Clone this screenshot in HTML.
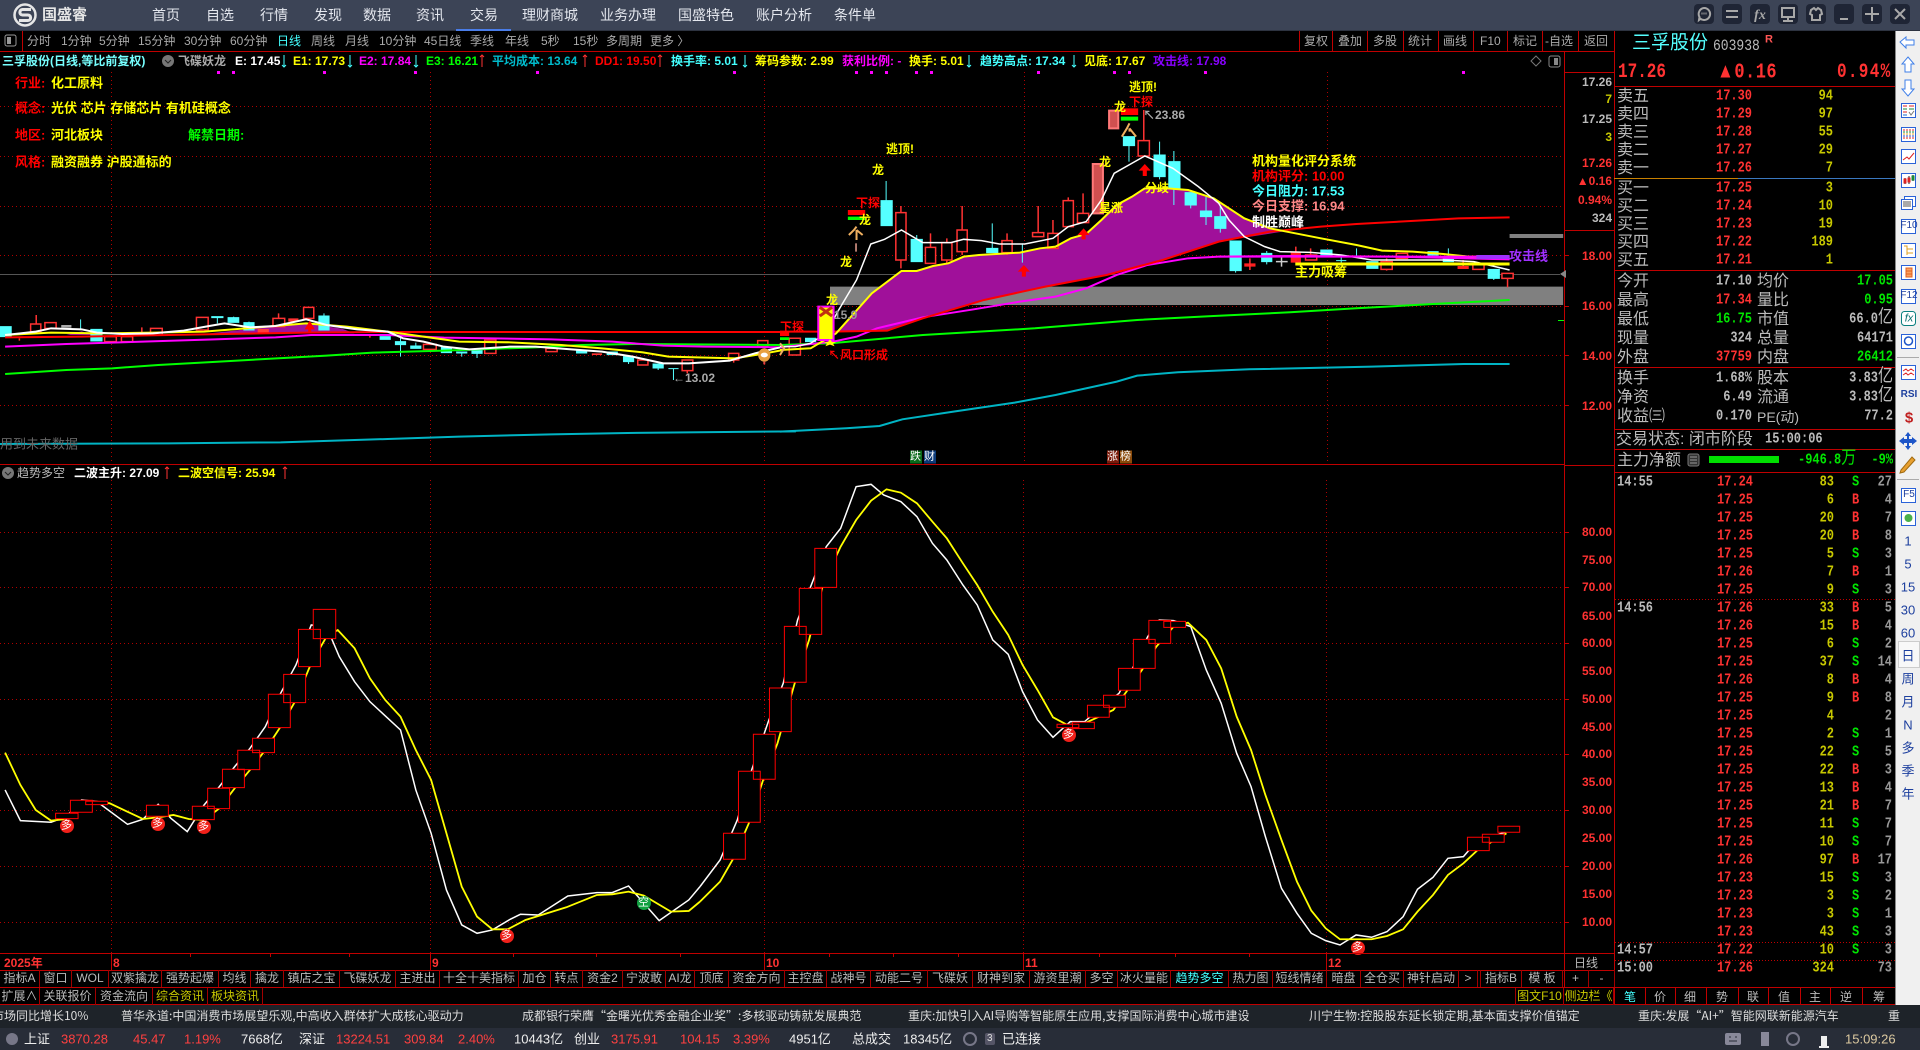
<!DOCTYPE html>
<html lang="zh"><head><meta charset="utf-8"><title>国盛睿</title>
<style>
html,body{margin:0;padding:0;background:#000;width:1920px;height:1050px;overflow:hidden}
body{position:relative;font-family:"Liberation Sans","Noto Sans CJK SC",sans-serif;font-size:12px;color:#bbb}
svg{position:absolute;left:0;top:0}
svg path,svg polyline,svg rect,svg line{vector-effect:non-scaling-stroke}
.t{position:absolute;white-space:nowrap;line-height:1;transform:translateY(-50%)}
.b{font-weight:bold}
.bar{position:absolute;left:0;width:1920px}
.n{position:absolute;top:15px;transform:translateY(-50%);font-size:14px;color:#e4e7ee;white-space:nowrap;line-height:1}
.tb{position:absolute;top:41px;transform:translateY(-50%);font-size:12px;color:#aaa;white-space:nowrap;line-height:1}
.lg{position:absolute;top:61px;transform:translateY(-50%);font-size:12px;font-weight:bold;white-space:nowrap;line-height:1}
.tab{position:absolute;height:17px;line-height:17px;text-align:center;font-size:12px;color:#bbb;border-right:1px solid #a00000;box-sizing:border-box;white-space:nowrap;overflow:hidden}
.r1{top:970px}.r2{top:988px}
.lb{position:absolute;left:1617px;font-size:16px;color:#bbb;line-height:1;transform:translateY(calc(-50% + 1px));white-space:nowrap}
.lb2{left:1757px}
.m{position:absolute;font-family:"Liberation Mono","Noto Sans CJK SC",monospace;font-size:12px;font-weight:bold;line-height:1;transform:translateY(-50%) scaleY(1.2);white-space:nowrap}
.m u{text-decoration:none;font-size:15px;line-height:0;font-weight:normal;font-family:"Noto Sans CJK SC",sans-serif}
.rd{color:#ff3232}.ye{color:#c8c800}.gr{color:#00e600}.wh{color:#bbb}
.tk{position:absolute;left:1614px;width:281px;height:18px}
.tk span{position:absolute;top:3px;font-family:"Liberation Mono",monospace;font-size:12px;font-weight:bold;line-height:1;white-space:nowrap;transform:scaleY(1.2)}
.a{right:142px;color:#ff3232}.v{right:61px;color:#c8c800}.s{left:238px}.c{right:3px;color:#999}.h{left:3px;color:#bbb}
.sb{position:absolute;left:1896px;width:24px;text-align:center;color:#1d3f9e;font-size:13px;line-height:1;transform:translateY(-50%)}
.ax{position:absolute;left:1566px;width:46px;text-align:right;font-size:12px;font-weight:bold;line-height:1;transform:translateY(-50%);color:#ff3232}
.ch{position:absolute;font-size:12px;font-weight:bold;line-height:1;transform:translateY(-50%);white-space:nowrap}
.f13{font-size:13px}
.ne{position:absolute;top:1016px;transform:translateY(-50%);color:#ddd;font-size:12px;white-space:nowrap;line-height:1;font-family:"Noto Sans CJK SC",sans-serif}
.st{position:absolute;top:1039px;transform:translateY(-50%);font-size:13px;white-space:nowrap;line-height:1}
.pk{color:#ff4040}.wt{color:#eee}
.big{position:absolute;top:72px;font-family:"Liberation Mono",monospace;font-size:16px;font-weight:bold;color:#ff3232;line-height:1;transform:translateY(-50%) scaleY(1.25);white-space:nowrap}
</style></head><body>

<svg width="1920" height="1050" viewBox="0 0 1920 1050">
<!-- grid -->
<g stroke="#b00000" stroke-width="1" stroke-dasharray="1 3" fill="none">
<path d="M0 106.500H1564M0 156.500H1564M0 206.500H1564M0 255.500H1564M0 306.500H1564M0 355.500H1564M0 405.500H1564"/>
<path d="M0 532.500H1564M0 587.500H1564M0 643.500H1564M0 699.500H1564M0 754.500H1564M0 810.500H1564M0 866.500H1564M0 922.500H1564"/>
<path d="M111.500 72V464M430.500 72V464M764.500 72V464M1024.500 72V464M1327.500 72V464"/>
<path d="M111.500 480V954M430.500 480V954M764.500 480V954M1023.500 480V954M1326.500 480V954"/>
</g>
<path d="M0 274.500H1560" stroke="#555" fill="none"/>

<!-- main pane: left part (zoom coords) -->
<g transform="translate(0 290) scale(.5102 .3333)">
<path d="M130 135L160 124L185 135ZM410 130L500 115L600 100L670 116L695 130Z" fill="#a0109a"/>
<path d="M505 117h22v12h-22z" fill="#ff3c3c"/>
<g stroke="#5ff" stroke-width="1" fill="#5ff">
<path d="M0 110h22v30H0zM178 118h22v35h-22zM415 80h22v3h-22zM447 83h21v14h-21zM478 98h20v22h-20zM625 78h20v42h-20zM745 140h20v8h-20zM775 155h20v9h-20zM805 168h20v7h-20zM865 172h20v16h-20zM895 186h20v3h-20zM925 181h20v9h-20zM1130 181h20v8h-20zM1190 186h20v8h-20zM1222 200h20v15h-20zM1280 222h20v12h-20z"/>
<path d="M158 88V120M426 83V100M458 80V83M488 95V100M635 70V78M785 140V200M815 158V168M905 189V200M935 190V204M1232 215V222M1290 235V240M1320 236V270M1310 236H1330" fill="none"/>
</g>
<g stroke="#ff3232" stroke-width="1.500" fill="#000">
<path d="M60 102h20v23H60zM88 98h22v17H88zM205 140h23v15h-23zM238 140h22v15h-22zM295 115h23v20h-23zM385 82h23v38h-23zM535 85h23v25h-23zM595 52h20v33h-20zM830 163h25v15h-25zM950 150h22v40h-22zM1070 175h22v10h-22zM1250 210h20v15h-20zM1337 210h21v32h-21zM1428 190h20v20h-20zM1485 152h20v18h-20z"/>
<path d="M71 75V102M278 112V130M546 70V85M1347 242V250M1438 210V218M38 145V152M725 135V143" fill="none"/>
</g>
<path d="M565 85h20v10h-20zM1160 190h20v5h-20z" fill="#ff3232"/>
<path d="M120 105h20v8h-20z" fill="#aaa"/>
<g fill="none" stroke-width="2">
<polyline stroke="#00b4c4" points="0,462 330,460 550,457 760,447 900,440 1080,433 1230,429 1560,424"/>
<polyline stroke="#0f0" points="10,252 130,240 220,235 310,225 430,215 520,207 640,197 730,188 870,182 1050,172 1140,165 1250,162 1535,165"/>
<polyline stroke="#f0f" points="10,170 130,162 280,155 420,148 540,142 610,135 760,135 870,143 1080,148 1200,155 1300,167 1380,170 1535,172"/>
<polyline stroke="#f00" points="10,142 160,140 400,133 600,128 755,126 1535,126"/>
<polyline stroke="#ff0" points="10,135 100,128 200,130 300,128 400,125 500,113 600,100 680,110 760,125 830,140 900,155 1000,157 1100,165 1180,175 1260,187 1310,200 1440,205 1500,190 1535,180"/>
<polyline stroke="#fff" points="10,135 40,130 70,125 100,115 160,118 190,128 240,132 300,130 360,122 410,108 440,100 490,112 540,108 600,88 640,105 700,118 760,125 790,145 830,155 870,170 920,178 1000,170 1050,170 1120,178 1180,185 1240,200 1300,220 1350,220 1430,212 1480,190 1535,170"/>
</g>
<path d="M607 92L617 118H610V128H604V118H597Z" fill="#f00"/>
<ellipse cx="1498" cy="195" rx="12" ry="20" fill="#e8a040"/>
<circle cx="1498" cy="195" r="7" fill="#fff"/>
<path d="M1498 215v8" stroke="#d44" stroke-width="2"/>
</g>

<!-- main pane: right part (zoom coords) -->
<g transform="translate(780 80) scale(.5102 .3333)">
<path d="M98 620H1535V675H98ZM1430 462H1535V474H1430Z" fill="#808080"/>
<path d="M110 760L180 640L238 573L268 573L300 558L330 550L360 530L390 525L470 518L510 505L540 500L570 475L600 462L630 420L660 375L690 350L715 325L760 325L800 330L850 355L880 385L910 415L960 445L985 455L860 485L750 540L640 585L520 620L400 660L280 715L210 752L110 755Z" fill="#a0109a"/>
<g stroke="#5ff" stroke-width="1" fill="#5ff">
<path d="M198 362h22v75h-22zM257 478h22v67h-22zM405 505h22v13h-22zM733 225h22v65h-22zM762 245h22v80h-22zM794 338h22v37h-22zM824 393h22v17h-22zM852 410h22v35h-22zM882 483h22v89h-22zM944 520h20v25h-20zM1060 510h22v15h-22zM1150 545h22v20h-22zM1270 515h20v10h-20zM1300 530h20v15h-20zM1388 568h22v27h-22zM673 170h22v27h-22zM50 775h20v10H50z"/>
<path d="M208 303V362M268 465V478M416 430V505M475 490V548M684 197V245M744 185V298M772 213V375M805 375V385M835 350V435M863 380V458M893 572V578M954 513V553M1100 530V550M1090 542H1110M1130 505V530M1310 505V530M1399 595V600" fill="none"/>
</g>
<path d="M983 530V560M972 545H995" stroke="#ccc" stroke-width="1.500" fill="none"/>
<g stroke="#ff3232" stroke-width="1.500" fill="#000">
<path d="M227 398h20v142h-20zM285 502h20v48h-20zM317 488h20v52h-20zM347 450h20v65h-20zM435 482h20v36h-20zM495 458h22v12h-22zM525 460h20v45h-20zM555 362h20v78h-20zM583 400h22v28h-22zM702 182h22v46h-22zM1030 525h22v15h-22zM1178 545h22v23h-22zM1208 520h22v15h-22zM1358 550h22v18h-22zM1415 580h22v15h-22zM18 775h22v50H18z"/>
<path d="M237 378V398M237 540V565M295 460V502M327 475V488M327 540V550M357 378V450M357 515V525M445 460V482M445 518V525M506 378V458M535 420V460M565 352V362M594 340V400M713 90V182M1040 505V525M1189 535V545M1189 568V572M1426 595V622" fill="none"/>
</g>
<path d="M613 252h20v148h-20zM645 92h18v53h-18z" fill="#d05050" stroke="#ff7878" stroke-width="2"/>
<path d="M910 550h22v10h-22zM1001 517h20v31h-20zM1328 558h22v9h-22z" fill="#ff2020"/>
<path d="M921 535V570M1011 500V517M1339 540V558" stroke="#ff3232" stroke-width="1.500" fill="none"/>
<path d="M133 390h34v15h-34zM668 85h34v20h-34zM0 755h18v13H0z" fill="#f00"/>
<path d="M133 410h34v10h-34zM668 110h34v12h-34zM0 772h18v8H0z" fill="#0f0"/>
<g fill="none" stroke-width="2">
<polyline stroke="#00b4c4" points="0,1055 130,1045 195,1038 240,1018 340,995 460,968 540,945 660,905 700,887 780,877 920,868 1160,860 1340,852 1430,852"/>
<polyline stroke="#0f0" points="0,795 100,790 280,765 500,745 700,720 850,708 1000,697 1130,685 1280,672 1430,660"/>
<polyline stroke="#f0f" points="0,802 105,785 150,770 190,745 280,712 380,688 470,665 540,650 600,625 660,585 720,555 800,535 860,530 1000,528 1200,530 1430,538"/>
<polyline stroke="#f00" points="0,755 100,755 210,752 280,715 400,660 520,620 640,585 750,540 860,485 960,455 1060,440 1130,432 1250,422 1330,415 1430,412"/>
<polyline stroke="#ff0" points="0,810 60,805 110,760 180,640 238,573 268,573 300,558 330,550 360,530 390,525 470,518 510,505 540,500 570,475 600,462 630,420 660,375 690,350 715,325 760,325 800,330 850,355 880,385 910,415 960,445 1010,460 1060,475 1130,495 1180,512 1240,515 1300,522 1350,530 1430,530"/>
<polyline stroke="#fff" stroke-width="1.500" points="0,800 30,800 60,790 90,760 115,690 150,600 178,492 205,478 238,450 280,488 335,488 360,478 395,482 430,492 480,492 535,475 565,440 600,425 630,360 655,280 715,228 770,265 820,320 860,370 880,420 910,470 950,500 980,515 1040,517 1100,525 1160,540 1220,540 1300,540 1360,545 1430,570"/>
</g>
<path d="M1010 552H1430" stroke="#ff0" stroke-width="3"/>
<path d="M860 530H1430" stroke="#f0f" stroke-width="2"/>
<path d="M1365 525h65v12h-65z" fill="#a030ff"/>
<path d="M75 680h30v100H75z" fill="#ff0" stroke="#f0f" stroke-width="2"/>
<path d="M78 682L102 708M102 682L78 708" stroke="#c03010" stroke-width="3"/>
<path d="M98 778l4 8h8l-6 5 3 8-9-5-9 5 3-8-6-5h8z" fill="#ff0"/>
<path d="M478 555L490 575H482V590H474V575H466Z" fill="#f00"/>
<path d="M595 445L607 465H599V478H591V465H583Z" fill="#f00"/>
<path d="M715 252L727 272H719V288H711V272H703Z" fill="#f00"/>
<path d="M150 440L145 450L135 465M150 450L162 465M150 450V480" stroke="#f0b060" stroke-width="2" fill="none"/>
<path d="M149 490V515" stroke="#e8a090" stroke-width="1.500"/>
<path d="M685 130L680 145L670 170M685 145L698 170M685 145V155" stroke="#f0b060" stroke-width="2" fill="none"/>
<path d="M0 790L8 805L0 825" stroke="#f0b060" stroke-width="2" fill="none"/>
</g>

<!-- sub pane left -->
<g transform="translate(0 480) scale(.5102 .3333)" fill="none">
<polyline stroke="#fff" stroke-width="1.500" points="10,930 40,1022 100,1027 130,1010 160,960 190,965 250,1033 280,1018 310,973 335,1015 367,1055 400,975 430,920 460,860 490,805 520,740 550,640 580,555 610,435 640,440 665,530 695,605 725,665 785,750 815,930 845,1060 875,1230 905,1335 935,1360 965,1350 1000,1318 1020,1303 1055,1305 1113,1248 1170,1238 1200,1238 1232,1218 1262,1270 1292,1322 1350,1260 1372,1220"/>
<polyline stroke="#ff0" stroke-width="1.800" points="10,818 40,915 70,990 100,1022 130,1017 160,985 190,965 215,970 280,1017 310,1012 340,1005 370,1017 400,1020 430,985 460,925 490,870 520,810 550,740 580,660 610,550 640,470 662,450 695,505 725,595 755,660 785,710 815,810 845,900 875,1060 905,1220 935,1310 965,1348 995,1348 1030,1320 1110,1282 1170,1245 1200,1243 1232,1235 1262,1247 1315,1295 1350,1293 1372,1265"/>
<path stroke="#f00" stroke-width="1" fill="#000" d="M109 1000H153V1016H109ZM138 961H181V997H138ZM168 964H211V974H168ZM287 976H330V1009H287ZM377 979H420V1019H377ZM407 925H450V986H407ZM436 868H479V923H436ZM466 811H509V869H466ZM495 775H538V818H495ZM526 643H569V743H526ZM556 583H599V668H556ZM585 448H628V560H585ZM614 388H658V476H614Z"/>
</g>
<!-- sub pane right -->
<g transform="translate(700 470) scale(.574 .3333)" fill="none">
<polyline stroke="#fff" stroke-width="1.500" points="0,1250 35,1170 65,1050 90,900 120,750 145,640 170,450 195,340 220,230 245,175 272,50 298,43 320,75 350,95 378,140 405,220 430,270 458,345 483,405 510,510 537,553 562,665 588,750 615,802 645,755 670,755 700,710 730,670 755,590 780,500 800,450 825,452 855,470 882,600 908,700 935,850 960,950 985,1100 1013,1255 1040,1330 1065,1390 1090,1412 1115,1425 1143,1395 1170,1402 1197,1385 1225,1340 1250,1258 1277,1222 1303,1165 1330,1160 1355,1110 1380,1100 1405,1085"/>
<polyline stroke="#ff0" stroke-width="1.800" points="0,1295 35,1235 60,1160 85,1060 110,930 135,820 165,640 190,510 215,340 245,230 272,150 298,92 325,58 350,68 378,100 405,155 430,205 458,280 483,345 510,425 537,495 562,585 588,660 615,742 640,765 670,760 695,740 720,720 745,660 770,600 795,530 825,470 850,458 882,510 908,595 935,740 960,840 985,975 1013,1110 1040,1235 1065,1322 1090,1375 1115,1408 1170,1408 1197,1398 1225,1378 1250,1325 1277,1275 1303,1215 1330,1180 1355,1140 1380,1115 1405,1090"/>
<path stroke="#f00" stroke-width="1" fill="#000" d="M41 1090H79V1168H41ZM67 904H105V1057H67ZM93 793H131V928H93ZM121 654H159V785H121ZM147 469H185V637H147ZM173 355H212V493H173ZM200 235H238V352H200ZM622 763H660V773H622ZM649 757H687V776H649ZM675 706H713V742H675ZM703 676H741V712H703ZM729 595H767V661H729ZM755 508H793V595H755ZM782 451H820V520H782ZM808 454H846V472H808ZM1337 1102H1375V1142H1337ZM1363 1093H1401V1117H1363ZM1390 1069H1428V1087H1390Z"/>
</g>
<!-- signal balls -->
<g fill="#f0201a"><ellipse cx="67" cy="826" rx="7" ry="7"/><ellipse cx="158" cy="824" rx="7" ry="7"/><ellipse cx="204" cy="827" rx="7" ry="7"/><ellipse cx="507" cy="936" rx="7" ry="7"/><ellipse cx="1069" cy="735" rx="7" ry="7"/><ellipse cx="1358" cy="948" rx="7" ry="7"/></g>
<ellipse cx="644" cy="903" rx="7" ry="7" fill="#10a040"/>

<!-- frames -->
<g stroke="#c00000" fill="none">
<path d="M0 51.500H1614M0 464.500H1564M0 953.500H1614M0 970.500H1564M0 987.500H1895M0 1004.500H1895M1564.500 52V987M1614.500 31V1005M1564.500 72.500H1614M1564.500 230.500H1614M1564.500 465.500H1614M1564 970.500H1614"/>
<path d="M1299.500 31V51M1332.500 31V51M1367.500 31V51M1403.500 31V51M1438.500 31V51M1473.500 31V51M1507.500 31V51M1542.500 31V51M1578.500 31V51M22.500 31V51"/>
<path d="M1614 86.500H1895M1614 270.500H1895M1614 367.500H1895M1614 429.500H1895M1614 449.500H1895M1614 472.500H1895"/>
<path d="M1615 599.500H1895M1615 942.500H1895M1615 960.500H1895" stroke-dasharray="1 2"/>
<path d="M1645.500 988V1004M1675.500 988V1004M1706.500 988V1004M1738.500 988V1004M1768.500 988V1004M1800.500 988V1004M1830.500 988V1004M1862.500 988V1004"/>
<path d="M111.500 954V970M430.500 954V970M764.500 954V970M1023.500 954V970M1326.500 954V970M190.500 954V957M270.500 954V957M349.500 954V957M513.500 954V957M596.500 954V957M680.500 954V957M829.500 954V957M893.500 954V957M958.500 954V957M1099.500 954V957M1175.500 954V957M1249.500 954V957"/>
<path d="M1564 255.500h5M1564 306.500h5M1564 355.500h5M1564 405.500h5M1564 532.500h5M1564 587.500h5M1564 643.500h5M1564 699.500h5M1564 754.500h5M1564 810.500h5M1564 866.500h5M1564 922.500h5"/>
</g>
<path d="M1614 178.500H1738" stroke="#c88000"/><path d="M1738 178.500H1895" stroke="#3a78c0"/>
<path d="M1566 270l-6 4 6 4z" fill="#888"/>
<path d="M1558 320.500h6" stroke="#0f0"/>
<!-- ticks magenta -->
<path d="M217 71h3v3h-3zM232 71h3v3h-3zM323 71h3v3h-3zM414 71h3v3h-3zM536 71h3v3h-3zM733 71h3v3h-3zM855 71h3v3h-3zM870 71h3v3h-3zM885 71h3v3h-3zM915 71h3v3h-3zM930 71h3v3h-3zM1037 71h3v3h-3zM1113 71h3v3h-3zM1128 71h3v3h-3zM1204 71h3v3h-3zM1462 71h3v3h-3z" fill="#f0f"/>
<!-- legend icons -->
<circle cx="168" cy="61" r="6" fill="#777"/><path d="M165 60l3 3 3-3" stroke="#222" fill="none"/>
<circle cx="8" cy="473" r="6" fill="#777"/><path d="M5 472l3 3 3-3" stroke="#222" fill="none"/>
<path d="M1536 56l5 5-5 5-5-5z" fill="none" stroke="#777"/>
<rect x="1549" y="56" width="11" height="11" fill="none" stroke="#888" rx="2"/><rect x="1554" y="58" width="4" height="7" fill="#888"/>
<rect x="5" y="35" width="11" height="11" fill="none" stroke="#999" rx="2"/><rect x="7" y="37" width="4" height="7" fill="#999"/>
<!-- 主力净额 -->
<rect x="1688" y="454" width="11" height="12" fill="#333" stroke="#777" rx="2"/><path d="M1690 457h7M1690 460h7M1690 463h7" stroke="#999"/>
<rect x="1709" y="456" width="70" height="7" fill="#00e000"/>
<!-- arrows legend -->
<g fill="none" stroke-width="1">
<path d="M284 55V67M282 65l2 2 2-2M350 55V67M348 65l2 2 2-2M416 55V67M414 65l2 2 2-2M745 55V67M743 65l2 2 2-2M969 55V67M967 65l2 2 2-2M1074 55V67M1072 65l2 2 2-2" stroke="#4ff"/>
<path d="M482 55V67M480 57l2-2 2 2M585 55V67M583 57l2-2 2 2M660 55V67M658 57l2-2 2 2M167 467V479M165 469l2-2 2 2M285 467V479M283 469l2-2 2 2" stroke="#f33"/>
</g>
</svg>

<!-- top bar -->
<div class="bar" style="top:0;height:30px;background:#3c4456"></div>
<div class="bar" style="top:30px;height:1px;background:#2d3340"></div>
<div style="position:absolute;left:456px;top:29px;width:55px;height:2px;background:#4a7de8"></div>
<svg width="40" height="30" viewBox="0 0 40 30" style="left:12px;top:0">
<circle cx="13" cy="15" r="10.500" fill="none" stroke="#e6e6e6" stroke-width="2.500"/>
<path d="M19 9.500H10.500C7 9.500 7 15 10.500 15H16C19.500 15 19.500 20.500 16 20.500H7" fill="none" stroke="#e6e6e6" stroke-width="3"/>
</svg>
<span class="t b" style="left:42px;top:15px;font-size:15px;color:#e6e6e6">国盛睿</span>
<span class="n" style="left:152px">首页</span><span class="n" style="left:206px">自选</span><span class="n" style="left:260px">行情</span><span class="n" style="left:314px">发现</span><span class="n" style="left:363px">数据</span><span class="n" style="left:416px">资讯</span><span class="n" style="left:470px">交易</span><span class="n" style="left:522px">理财商城</span><span class="n" style="left:600px">业务办理</span><span class="n" style="left:678px">国盛特色</span><span class="n" style="left:756px">账户分析</span><span class="n" style="left:834px">条件单</span>
<svg width="230" height="28" viewBox="1690 0 230 28" style="left:1690px;top:0">
<g fill="#1f2535"><rect x="1694" y="4" width="20" height="20" rx="4"/><rect x="1722" y="4" width="20" height="20" rx="4"/><rect x="1750" y="4" width="20" height="20" rx="4"/><rect x="1778" y="4" width="20" height="20" rx="4"/><rect x="1806" y="4" width="20" height="20" rx="4"/><rect x="1834" y="4" width="20" height="20" rx="4"/><rect x="1862" y="4" width="20" height="20" rx="4"/><rect x="1890" y="4" width="20" height="20" rx="4"/></g>
<g fill="none" stroke="#a8a8a8" stroke-width="2">
<path d="M1704 8a6 6 0 1 1-3.500 10.800L1699 20l.5-3a6 6 0 0 1 4.500-9z"/>
<path d="M1701.500 13.500h6M1706.500 13.500" stroke-dasharray="1 1"/>
<path d="M1726 11h12M1726 17h12"/>
<path d="M1782 8h12v9h-12zM1788 17v3M1783 21h10"/>
<path d="M1811 10l3-2 2 2 2-2 3 2 1 4-2 1v5h-8v-5l-2-1z"/>
<path d="M1840 19h8"/>
<path d="M1872 7v7h-7M1872 21v-7h7"/>
<path d="M1895 9l10 10M1905 9l-10 10"/>
</g>
<text x="1760" y="19" text-anchor="middle" fill="#a8a8a8" font-size="14" font-style="italic" font-weight="bold" font-family="Liberation Serif">fx</text>
</svg>

<!-- second row -->
<span class="tb" style="left:27px">分时</span><span class="tb" style="left:61px">1分钟</span><span class="tb" style="left:99px">5分钟</span><span class="tb" style="left:138px">15分钟</span><span class="tb" style="left:184px">30分钟</span><span class="tb" style="left:230px">60分钟</span><span class="tb" style="left:277px;color:#4ff">日线</span><span class="tb" style="left:311px">周线</span><span class="tb" style="left:345px">月线</span><span class="tb" style="left:379px">10分钟</span><span class="tb" style="left:424px">45日线</span><span class="tb" style="left:470px">季线</span><span class="tb" style="left:505px">年线</span><span class="tb" style="left:541px">5秒</span><span class="tb" style="left:573px">15秒</span><span class="tb" style="left:606px">多周期</span><span class="tb" style="left:650px">更多 〉</span>
<span class="tb" style="left:1304px">复权</span><span class="tb" style="left:1338px">叠加</span><span class="tb" style="left:1373px">多股</span><span class="tb" style="left:1408px">统计</span><span class="tb" style="left:1443px">画线</span><span class="tb" style="left:1480px">F10</span><span class="tb" style="left:1513px">标记</span><span class="tb" style="left:1545px">-自选</span><span class="tb" style="left:1584px">返回</span>

<!-- legend -->
<span class="lg" style="left:2px;color:#7ff">三孚股份(日线,等比前复权)</span><span class="lg" style="left:178px;color:#aaa">飞碟妖龙</span>
<span class="lg" style="left:235px;color:#fff">E: 17.45</span><span class="lg" style="left:293px;color:#ff0">E1: 17.73</span><span class="lg" style="left:359px;color:#f0f">E2: 17.84</span><span class="lg" style="left:426px;color:#0f0">E3: 16.21</span><span class="lg" style="left:492px;color:#0bc">平均成本: 13.64</span><span class="lg" style="left:595px;color:#f00">DD1: 19.50</span><span class="lg" style="left:671px;color:#4ff">换手率: 5.01</span><span class="lg" style="left:755px;color:#ff0">筹码参数: 2.99</span><span class="lg" style="left:842px;color:#f0f">获利比例: -</span><span class="lg" style="left:909px;color:#ff0">换手: 5.01</span><span class="lg" style="left:980px;color:#4ff">趋势高点: 17.34</span><span class="lg" style="left:1084px;color:#ff0">见底: 17.67</span><span class="lg" style="left:1153px;color:#80f">攻击线: 17.98</span>

<!-- left labels -->
<span class="ch" style="left:15px;top:83px;font-size:13px;color:#f00">行业:</span><span class="ch" style="left:51px;top:83px;font-size:13px;color:#ff0">化工原料</span>
<span class="ch" style="left:15px;top:108px;font-size:13px;color:#f00">概念:</span><span class="ch" style="left:51px;top:108px;font-size:13px;color:#ff0">光伏 芯片 存储芯片 有机硅概念</span>
<span class="ch" style="left:15px;top:135px;font-size:13px;color:#f00">地区:</span><span class="ch" style="left:51px;top:135px;font-size:13px;color:#ff0">河北板块</span><span class="ch" style="left:188px;top:135px;font-size:13px;color:#0f0">解禁日期:</span>
<span class="ch" style="left:15px;top:162px;font-size:13px;color:#f00">风格:</span><span class="ch" style="left:51px;top:162px;font-size:13px;color:#ff0">融资融券 沪股通标的</span>

<!-- chart texts -->
<span class="ch" style="left:886px;top:149px;color:#ff0">逃顶!</span><span class="ch" style="left:872px;top:170px;color:#ff0">龙</span><span class="ch" style="left:856px;top:203px;color:#f00">下探</span><span class="ch" style="left:859px;top:220px;color:#ff0">龙</span><span class="ch" style="left:840px;top:262px;color:#ff0">龙</span><span class="ch" style="left:826px;top:300px;color:#ff0">龙</span><span class="ch" style="left:834px;top:315px;color:#999">15.9</span><span class="ch" style="left:780px;top:327px;color:#f00">下探</span><span class="ch" style="left:828px;top:355px;color:#f00">↖风口形成</span>
<span class="ch" style="left:1099px;top:162px;color:#ff0">龙</span><span class="ch" style="left:1099px;top:208px;color:#ff0">星涨</span><span class="ch" style="left:1114px;top:107px;color:#ff0">龙</span><span class="ch" style="left:1129px;top:87px;color:#ff0">逃顶!</span><span class="ch" style="left:1129px;top:102px;color:#f00">下探</span><span class="ch" style="left:1143px;top:115px;color:#aaa">↖23.86</span><span class="ch" style="left:1145px;top:188px;color:#ff0">分歧</span>
<span class="ch f13" style="left:1252px;top:161px;color:#ff0">机构量化评分系统</span><span class="ch f13" style="left:1252px;top:176px;color:#f00">机构评分:  10.00</span><span class="ch f13" style="left:1252px;top:191px;color:#4ff">今日阻力:  17.53</span><span class="ch f13" style="left:1252px;top:206px;color:#f88">今日支撑:  16.94</span><span class="ch f13" style="left:1252px;top:222px;color:#fff">制胜巅峰</span><span class="ch f13" style="left:1295px;top:272px;color:#ff0">主力吸筹</span><span class="ch f13" style="left:1509px;top:256px;color:#a030ff">攻击线</span>
<span class="ch" style="left:673px;top:378px;color:#aaa">←13.02</span>
<span class="ch" style="left:0;top:444px;color:#666;font-size:13px;font-weight:normal">用到未来数据</span>
<span class="ch" style="left:910px;top:457px;background:#0a6a1a;color:#fff;width:12px;font-size:11px;font-weight:normal;padding:1px 0">跌</span><span class="ch" style="left:924px;top:457px;background:#0c3a78;color:#fff;width:12px;font-size:11px;font-weight:normal;padding:1px 0">财</span><span class="ch" style="left:1107px;top:457px;background:#7a1a0a;color:#fff;width:12px;font-size:11px;font-weight:normal;padding:1px 0">涨</span><span class="ch" style="left:1120px;top:457px;background:#8a4a0a;color:#fff;width:12px;font-size:11px;font-weight:normal;padding:1px 0">榜</span>
<span class="ch" style="left:17px;top:473px;color:#bbb;font-weight:normal">趋势多空</span><span class="ch" style="left:74px;top:473px;color:#fff">二波主升: 27.09</span><span class="ch" style="left:178px;top:473px;color:#ff0">二波空信号: 25.94</span>
<span class="ch" style="left:61px;top:826px;color:#fff;font-size:11px;font-weight:normal">多</span><span class="ch" style="left:152px;top:824px;color:#fff;font-size:11px;font-weight:normal">多</span><span class="ch" style="left:198px;top:827px;color:#fff;font-size:11px;font-weight:normal">多</span><span class="ch" style="left:501px;top:936px;color:#fff;font-size:11px;font-weight:normal">多</span><span class="ch" style="left:1063px;top:735px;color:#fff;font-size:11px;font-weight:normal">多</span><span class="ch" style="left:1352px;top:948px;color:#fff;font-size:11px;font-weight:normal">多</span><span class="ch" style="left:638px;top:903px;color:#fff;font-size:11px;font-weight:normal">空</span>
<span class="ch" style="left:4px;top:963px;color:#f33">2025年</span><span class="ch" style="left:113px;top:963px;color:#f33">8</span><span class="ch" style="left:432px;top:963px;color:#f33">9</span><span class="ch" style="left:766px;top:963px;color:#f33">10</span><span class="ch" style="left:1025px;top:963px;color:#f33">11</span><span class="ch" style="left:1328px;top:963px;color:#f33">12</span>
<span class="ch" style="left:1574px;top:963px;color:#bbb;font-weight:normal">日线</span>

<!-- axis -->
<span class="ax" style="top:82px;color:#bbb">17.26</span><span class="ax" style="top:99px;color:#c8c800">7</span><span class="ax" style="top:119px;color:#bbb">17.25</span><span class="ax" style="top:137px;color:#c8c800">3</span><span class="ax" style="top:163px">17.26</span><span class="ax" style="top:181px">▲0.16</span><span class="ax" style="top:200px">0.94%</span><span class="ax" style="top:218px;color:#bbb">324</span><span class="ax" style="top:256px">18.00</span><span class="ax" style="top:306px">16.00</span><span class="ax" style="top:356px">14.00</span><span class="ax" style="top:406px">12.00</span>
<span class="ax" style="top:532px">80.00</span><span class="ax" style="top:560px">75.00</span><span class="ax" style="top:587px">70.00</span><span class="ax" style="top:616px">65.00</span><span class="ax" style="top:643px">60.00</span><span class="ax" style="top:671px">55.00</span><span class="ax" style="top:699px">50.00</span><span class="ax" style="top:727px">45.00</span><span class="ax" style="top:754px">40.00</span><span class="ax" style="top:782px">35.00</span><span class="ax" style="top:810px">30.00</span><span class="ax" style="top:838px">25.00</span><span class="ax" style="top:866px">20.00</span><span class="ax" style="top:894px">15.00</span><span class="ax" style="top:922px">10.00</span>

<!-- tabs row1 -->
<div class="tab r1" style="left:0;width:40px">指标A</div><div class="tab r1" style="left:40px;width:32px">窗口</div><div class="tab r1" style="left:72px;width:37px">WOL</div><div class="tab r1" style="left:109px;width:53px">双紫擒龙</div><div class="tab r1" style="left:162px;width:57px">强势起爆</div><div class="tab r1" style="left:219px;width:32px">均线</div><div class="tab r1" style="left:251px;width:33px">擒龙</div><div class="tab r1" style="left:284px;width:56px">镇店之宝</div><div class="tab r1" style="left:340px;width:56px">飞碟妖龙</div><div class="tab r1" style="left:396px;width:44px">主进出</div><div class="tab r1" style="left:440px;width:79px">十全十美指标</div><div class="tab r1" style="left:519px;width:32px">加仓</div><div class="tab r1" style="left:551px;width:32px">转点</div><div class="tab r1" style="left:583px;width:40px">资金2</div><div class="tab r1" style="left:623px;width:43px">宁波敢</div><div class="tab r1" style="left:666px;width:29px">AI龙</div><div class="tab r1" style="left:695px;width:34px">顶底</div><div class="tab r1" style="left:729px;width:56px">资金方向</div><div class="tab r1" style="left:785px;width:42px">主控盘</div><div class="tab r1" style="left:827px;width:44px">战神号</div><div class="tab r1" style="left:871px;width:57px">动能二号</div><div class="tab r1" style="left:928px;width:45px">飞碟妖</div><div class="tab r1" style="left:973px;width:57px">财神到家</div><div class="tab r1" style="left:1030px;width:56px">游资里潮</div><div class="tab r1" style="left:1086px;width:32px">多空</div><div class="tab r1" style="left:1118px;width:53px">冰火量能</div><div class="tab r1" style="left:1171px;width:58px;color:#4ff">趋势多空</div><div class="tab r1" style="left:1229px;width:44px">热力图</div><div class="tab r1" style="left:1273px;width:54px">短线情绪</div><div class="tab r1" style="left:1327px;width:34px">暗盘</div><div class="tab r1" style="left:1361px;width:43px">全仓买</div><div class="tab r1" style="left:1404px;width:55px">神针启动</div><div class="tab r1" style="left:1459px;width:19px">&gt;</div><div class="tab r1" style="left:1478px;width:3px"></div><div class="tab r1" style="left:1481px;width:41px">指标B</div><div class="tab r1" style="left:1522px;width:41px">模 板</div><div class="tab r1" style="left:1563px;width:26px">+</div><div class="tab r1" style="left:1589px;width:26px">-</div>
<!-- tabs row2 -->
<div class="tab r2" style="left:0;width:40px">扩展∧</div><div class="tab r2" style="left:40px;width:56px">关联报价</div><div class="tab r2" style="left:96px;width:57px">资金流向</div><div class="tab r2" style="left:153px;width:55px;color:#c8c800">综合资讯</div><div class="tab r2" style="left:208px;width:55px;color:#c8c800">板块资讯</div>
<div class="tab r2" style="left:1515px;width:49px;color:#c8c800;border-left:1px solid #a00000">图文F10</div><div class="tab r2" style="left:1564px;width:50px;color:#c8c800">侧边栏《</div>
<span class="t" style="left:1624px;top:997px;color:#4ff">笔</span><span class="t" style="left:1654px;top:997px">价</span><span class="t" style="left:1684px;top:997px">细</span><span class="t" style="left:1716px;top:997px">势</span><span class="t" style="left:1747px;top:997px">联</span><span class="t" style="left:1778px;top:997px">值</span><span class="t" style="left:1809px;top:997px">主</span><span class="t" style="left:1840px;top:997px">逆</span><span class="t" style="left:1873px;top:997px">筹</span>

<!-- quote panel -->
<span class="t" style="left:1632px;top:43px;font-size:19px;color:#5ff">三孚股份</span><span class="m wh" style="left:1713px;top:46px;font-size:13px;font-weight:normal">603938</span><span class="t b" style="left:1765px;top:40px;font-size:11px;color:#f55">R</span>
<span class="big" style="left:1618px">17.26</span><span class="big" style="left:1717px;font-size:17px;letter-spacing:.5px"><span style="font-family:'Liberation Sans','Noto Sans CJK SC',sans-serif">▲</span>0.16</span><span class="big" style="left:1837px;letter-spacing:1.300px">0.94%</span>

<span class="lb" style="top:96px">卖五</span><span class="m rd" style="left:1716px;top:96px">17.30</span><span class="m ye" style="right:87px;top:96px">94</span>
<span class="lb" style="top:114px">卖四</span><span class="m rd" style="left:1716px;top:114px">17.29</span><span class="m ye" style="right:87px;top:114px">97</span>
<span class="lb" style="top:132px">卖三</span><span class="m rd" style="left:1716px;top:132px">17.28</span><span class="m ye" style="right:87px;top:132px">55</span>
<span class="lb" style="top:150px">卖二</span><span class="m rd" style="left:1716px;top:150px">17.27</span><span class="m ye" style="right:87px;top:150px">29</span>
<span class="lb" style="top:168px">卖一</span><span class="m rd" style="left:1716px;top:168px">17.26</span><span class="m ye" style="right:87px;top:168px">7</span>
<span class="lb" style="top:188px">买一</span><span class="m rd" style="left:1716px;top:188px">17.25</span><span class="m ye" style="right:87px;top:188px">3</span>
<span class="lb" style="top:206px">买二</span><span class="m rd" style="left:1716px;top:206px">17.24</span><span class="m ye" style="right:87px;top:206px">10</span>
<span class="lb" style="top:224px">买三</span><span class="m rd" style="left:1716px;top:224px">17.23</span><span class="m ye" style="right:87px;top:224px">19</span>
<span class="lb" style="top:242px">买四</span><span class="m rd" style="left:1716px;top:242px">17.22</span><span class="m ye" style="right:87px;top:242px">189</span>
<span class="lb" style="top:260px">买五</span><span class="m rd" style="left:1716px;top:260px">17.21</span><span class="m ye" style="right:87px;top:260px">1</span>

<span class="lb" style="top:281px">今开</span><span class="m wh" style="right:168px;top:281px">17.10</span><span class="lb lb2" style="top:281px">均价</span><span class="m gr" style="right:27px;top:281px">17.05</span>
<span class="lb" style="top:300px">最高</span><span class="m rd" style="right:168px;top:300px">17.34</span><span class="lb lb2" style="top:300px">量比</span><span class="m gr" style="right:27px;top:300px">0.95</span>
<span class="lb" style="top:319px">最低</span><span class="m gr" style="right:168px;top:319px">16.75</span><span class="lb lb2" style="top:319px">市值</span><span class="m wh" style="right:27px;top:319px">66.0<u>亿</u></span>
<span class="lb" style="top:338px">现量</span><span class="m wh" style="right:168px;top:338px">324</span><span class="lb lb2" style="top:338px">总量</span><span class="m wh" style="right:27px;top:338px">64171</span>
<span class="lb" style="top:357px">外盘</span><span class="m rd" style="right:168px;top:357px">37759</span><span class="lb lb2" style="top:357px">内盘</span><span class="m gr" style="right:27px;top:357px">26412</span>
<span class="lb" style="top:378px">换手</span><span class="m wh" style="right:168px;top:378px">1.68%</span><span class="lb lb2" style="top:378px">股本</span><span class="m wh" style="right:27px;top:378px">3.83<u>亿</u></span>
<span class="lb" style="top:397px">净资</span><span class="m wh" style="right:168px;top:397px">6.49</span><span class="lb lb2" style="top:397px">流通</span><span class="m wh" style="right:27px;top:397px">3.83<u>亿</u></span>
<span class="lb" style="top:416px">收益㈢</span><span class="m wh" style="right:168px;top:416px">0.170</span><span class="lb lb2" style="top:416px;font-size:14px">PE(动)</span><span class="m wh" style="right:27px;top:416px">77.2</span>
<span class="lb" style="left:1616px;top:439px">交易状态: 闭市阶段</span><span class="m wh" style="left:1765px;top:439px">15:00:06</span>
<span class="lb" style="top:460px">主力净额</span><span class="m gr" style="left:1798px;top:460px">-946.8<u>万</u></span><span class="m gr" style="right:27px;top:460px">-9%</span>

<div class="tk" style="top:473px"><span class="h">14:55</span><span class="a">17.24</span><span class="v">83</span><span class="s gr">S</span><span class="c">27</span></div>
<div class="tk" style="top:491px"><span class="a">17.25</span><span class="v">6</span><span class="s rd">B</span><span class="c">4</span></div>
<div class="tk" style="top:509px"><span class="a">17.25</span><span class="v">20</span><span class="s rd">B</span><span class="c">7</span></div>
<div class="tk" style="top:527px"><span class="a">17.25</span><span class="v">20</span><span class="s rd">B</span><span class="c">8</span></div>
<div class="tk" style="top:545px"><span class="a">17.25</span><span class="v">5</span><span class="s gr">S</span><span class="c">3</span></div>
<div class="tk" style="top:563px"><span class="a">17.26</span><span class="v">7</span><span class="s rd">B</span><span class="c">1</span></div>
<div class="tk" style="top:581px"><span class="a">17.25</span><span class="v">9</span><span class="s gr">S</span><span class="c">3</span></div>
<div class="tk" style="top:599px"><span class="h">14:56</span><span class="a">17.26</span><span class="v">33</span><span class="s rd">B</span><span class="c">5</span></div>
<div class="tk" style="top:617px"><span class="a">17.26</span><span class="v">15</span><span class="s rd">B</span><span class="c">4</span></div>
<div class="tk" style="top:635px"><span class="a">17.25</span><span class="v">6</span><span class="s gr">S</span><span class="c">2</span></div>
<div class="tk" style="top:653px"><span class="a">17.25</span><span class="v">37</span><span class="s gr">S</span><span class="c">14</span></div>
<div class="tk" style="top:671px"><span class="a">17.26</span><span class="v">8</span><span class="s rd">B</span><span class="c">4</span></div>
<div class="tk" style="top:689px"><span class="a">17.25</span><span class="v">9</span><span class="s rd">B</span><span class="c">8</span></div>
<div class="tk" style="top:707px"><span class="a">17.25</span><span class="v">4</span><span class="c">2</span></div>
<div class="tk" style="top:725px"><span class="a">17.25</span><span class="v">2</span><span class="s gr">S</span><span class="c">1</span></div>
<div class="tk" style="top:743px"><span class="a">17.25</span><span class="v">22</span><span class="s gr">S</span><span class="c">5</span></div>
<div class="tk" style="top:761px"><span class="a">17.25</span><span class="v">22</span><span class="s rd">B</span><span class="c">3</span></div>
<div class="tk" style="top:779px"><span class="a">17.25</span><span class="v">13</span><span class="s rd">B</span><span class="c">4</span></div>
<div class="tk" style="top:797px"><span class="a">17.25</span><span class="v">21</span><span class="s rd">B</span><span class="c">7</span></div>
<div class="tk" style="top:815px"><span class="a">17.25</span><span class="v">11</span><span class="s gr">S</span><span class="c">7</span></div>
<div class="tk" style="top:833px"><span class="a">17.25</span><span class="v">10</span><span class="s gr">S</span><span class="c">7</span></div>
<div class="tk" style="top:851px"><span class="a">17.26</span><span class="v">97</span><span class="s rd">B</span><span class="c">17</span></div>
<div class="tk" style="top:869px"><span class="a">17.23</span><span class="v">15</span><span class="s gr">S</span><span class="c">3</span></div>
<div class="tk" style="top:887px"><span class="a">17.23</span><span class="v">3</span><span class="s gr">S</span><span class="c">2</span></div>
<div class="tk" style="top:905px"><span class="a">17.23</span><span class="v">3</span><span class="s gr">S</span><span class="c">1</span></div>
<div class="tk" style="top:923px"><span class="a">17.23</span><span class="v">43</span><span class="s gr">S</span><span class="c">3</span></div>
<div class="tk" style="top:941px"><span class="h">14:57</span><span class="a">17.22</span><span class="v">10</span><span class="s gr">S</span><span class="c">3</span></div>
<div class="tk" style="top:959px"><span class="h">15:00</span><span class="a">17.26</span><span class="v">324</span><span class="c">73</span></div>

<!-- sidebar -->
<div style="position:absolute;left:1896px;top:31px;width:24px;height:974px;background:#f0f0f0"></div>
<svg width="24" height="974" viewBox="1896 31 24 974" style="left:1896px;top:31px">
<g fill="#fff" stroke="#3f7fe8">
<path d="M1900 42l6-5v3h8v5h-8v3z"/><path d="M1908 57l6 7h-3v8h-6v-8h-3z"/><path d="M1905 80h6v9h3l-6 7-6-7h3z"/>
</g>
<g fill="#fff" stroke="#2a62d8">
<rect x="1901.500" y="103.500" width="14" height="14"/><rect x="1901.500" y="127.500" width="14" height="14"/><rect x="1901.500" y="149.500" width="14" height="14"/><rect x="1901.500" y="173.500" width="14" height="14"/>
<rect x="1904.500" y="196.500" width="11" height="10"/><rect x="1901.500" y="199.500" width="11" height="10"/>
<rect x="1901.500" y="219.500" width="14" height="14"/><rect x="1901.500" y="243.500" width="14" height="14"/><rect x="1901.500" y="265.500" width="14" height="14"/><rect x="1901.500" y="289.500" width="14" height="14"/><rect x="1901.500" y="311.500" width="14" height="14" rx="3" stroke="#0a8080"/><rect x="1901.500" y="334.500" width="14" height="14"/>
<rect x="1901.500" y="365.500" width="14" height="14"/><rect x="1901.500" y="488.500" width="14" height="14"/><rect x="1901.500" y="511.500" width="14" height="14"/>
</g>
<path d="M1903 106h4M1909 106h5" stroke="#d22"/><path d="M1903 109h4M1909 109h5" stroke="#1a8a3a"/><path d="M1903 112h4" stroke="#d22"/><path d="M1909 112l2 3 3-4" stroke="#777" fill="none"/><path d="M1903 115h4" stroke="#1a6ac8"/>
<g stroke-dasharray="2 1"><path d="M1903 130h11" stroke="#d22"/><path d="M1903 132h11" stroke="#1a8a3a"/><path d="M1903 134h11" stroke="#e8a020"/><path d="M1903 136h11" stroke="#2a4ac8"/><path d="M1903 138h11" stroke="#d22"/></g>
<path d="M1903 160l4-3 2 2 5-6" stroke="#d22" fill="none"/>
<path d="M1905 178v6M1909 176v8M1913 175v6" stroke="#222"/><path d="M1904 179h2v4h-2zM1908 178h2v4h-2z" fill="#d22" stroke="#d22"/><path d="M1912 176h2v4h-2z" fill="#1a8a3a" stroke="#1a8a3a"/>
<path d="M1903 202h8M1903 204h8M1903 206h8" stroke="#555"/>
<path d="M1904 246h3v9M1907 249h6M1907 253h6" stroke="#e0a020" fill="none"/>
<path d="M1906 268h6v9h-6zM1906 271h6M1906 274h6" fill="#f8a060" stroke="#e06020"/>
<circle cx="1908.500" cy="341" r="4" fill="none" stroke="#1d55c8" stroke-width="1.500"/>
<path d="M1903 371l3-2 2 2 3-2 3 2M1903 375l3-2 2 2 3-2 3 2" stroke="#d22" fill="none"/>
<path d="M1897 357.500h22M1897 479.500h22" stroke="#aaa"/>
<circle cx="1908.500" cy="518" r="4" fill="#4ab04a"/>
<path d="M1908 432l-3 4h2v3h-3v-2l-5 4 5 4v-2h3v3h-2l3 4 3-4h-2v-3h3v2l5-4-5-4v2h-3v-3h2z" fill="#1d55c8"/>
<path d="M1901 470l11-13 3 3-11 12-4 1z" fill="#e8a030" stroke="#a06a10"/>
<path d="M1898.500 641.500h21v26h-21z" fill="#f8f8f8" stroke="#ccc"/>
</svg>
<span class="sb" style="top:226px;font-size:10px;left:1897px">F10</span><span class="sb" style="top:296px;font-size:10px;left:1897px">F12</span><span class="sb" style="top:319px;font-style:italic;color:#0a7070;font-size:11px;left:1897px">fx</span><span class="sb" style="top:395px;font-size:10px;font-weight:bold;left:1897px">RSI</span><span class="sb" style="top:418px;color:#c02020;font-size:15px;font-weight:bold;left:1897px">$</span>
<span class="sb" style="top:495px;font-size:10px;left:1897px">F5</span><span class="sb" style="top:541px">1</span><span class="sb" style="top:564px">5</span><span class="sb" style="top:587px">15</span><span class="sb" style="top:610px">30</span><span class="sb" style="top:633px">60</span><span class="sb" style="top:656px">日</span><span class="sb" style="top:679px">周</span><span class="sb" style="top:702px">月</span><span class="sb" style="top:725px">N</span><span class="sb" style="top:748px">多</span><span class="sb" style="top:771px">季</span><span class="sb" style="top:794px">年</span>
<div style="position:absolute;left:1895px;top:31px;width:1px;height:974px;background:#888"></div>

<!-- news -->
<div class="bar" style="top:1005px;height:23px;background:#1e2329;overflow:hidden"></div>
<span class="ne" style="left:-8px">市场同比增长10%</span><span class="ne" style="left:121px">普华永道:中国消费市场展望乐观,中高收入群体扩大成核心驱动力</span><span class="ne" style="left:522px">成都银行荣膺“金曙光优秀金融企业奖”:多核驱动铸就发展典范</span><span class="ne" style="left:908px">重庆:加快引入AI导购等智能原生应用,支撑国际消费中心城市建设</span><span class="ne" style="left:1309px">川宁生物:控股股东延长锁定期,基本面支撑价值锚定</span><span class="ne" style="left:1638px">重庆:发展“AI+”智能网联新能源汽车</span><span class="ne" style="left:1888px">重</span>

<!-- status -->
<div class="bar" style="top:1028px;height:22px;background:#282d38"></div>
<svg width="1920" height="22" viewBox="0 1028 1920 22" style="top:1028px">
<circle cx="12" cy="1039" r="6" fill="#778"/>
<circle cx="970" cy="1039" r="6" fill="none" stroke="#778" stroke-width="2"/>
<rect x="985" y="1033" width="10" height="12" rx="2" fill="#556"/>
<rect x="1725" y="1033" width="16" height="12" rx="2" fill="#889"/><path d="M1729 1037h2M1735 1037h2M1729 1041h8" stroke="#282d38"/>
<rect x="1761" y="1032" width="8" height="14" fill="#889"/>
<circle cx="1793" cy="1039" r="6" fill="none" stroke="#778" stroke-width="2"/>
<path d="M1821 1036h6v10h-6zM1819 1046h10v2h-10z" fill="#eee"/>
</svg>
<span class="st" style="left:987px;font-size:10px;color:#ddd">3</span>
<span class="st wt" style="left:24px">上证</span><span class="st pk" style="left:61px">3870.28</span><span class="st pk" style="left:133px">45.47</span><span class="st pk" style="left:184px">1.19%</span><span class="st wt" style="left:241px">7668亿</span><span class="st wt" style="left:299px">深证</span><span class="st pk" style="left:336px">13224.51</span><span class="st pk" style="left:404px">309.84</span><span class="st pk" style="left:458px">2.40%</span><span class="st wt" style="left:514px">10443亿</span><span class="st wt" style="left:574px">创业</span><span class="st pk" style="left:611px">3175.91</span><span class="st pk" style="left:680px">104.15</span><span class="st pk" style="left:733px">3.39%</span><span class="st wt" style="left:789px">4951亿</span><span class="st wt" style="left:852px">总成交</span><span class="st wt" style="left:903px">18345亿</span><span class="st wt" style="left:1002px">已连接</span>
<span class="st" style="left:1845px;color:#dcc9a0">15:09:26</span>
</body></html>
